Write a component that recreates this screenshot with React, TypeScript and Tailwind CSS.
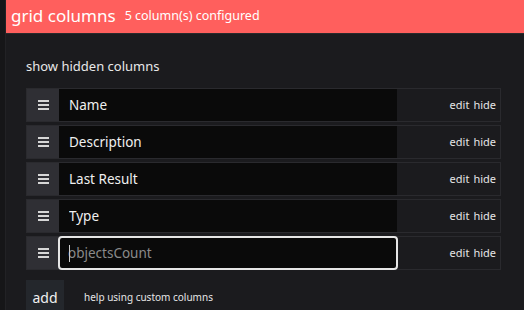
import React, { useState } from "react";

interface Column {
  name: string;
  placeholder?: boolean;
}

const columns: Column[] = [
  { name: "Name" },
  { name: "Description" },
  { name: "Last Result" },
  { name: "Type" },
  { name: "objectsCount", placeholder: true },
];

// handle with three bars
const DragHandle: React.FC = () => (
  <div className="w-[32px] shrink-0 bg-[#2f2f34] flex items-center justify-center">
    <svg width="11" height="10" viewBox="0 0 11 10">
      <rect x="0" y="0" width="11" height="2" fill="#d6d6d6" />
      <rect x="0" y="4" width="11" height="2" fill="#d6d6d6" />
      <rect x="0" y="8" width="11" height="2" fill="#d6d6d6" />
    </svg>
  </div>
);

const ColumnRow: React.FC<{ column: Column }> = ({ column }) => {
  const [value, setValue] = useState(column.placeholder ? "" : column.name);

  return (
    <div className="flex shrink-0 h-[34px] border border-[#2a2a2e]">
      <DragHandle />
      {column.placeholder ? (
        <div className="w-[340px] -my-px -ml-px h-[34px] rounded-[4px] border-2 border-[#e6e6e6] bg-[#0a0a0a] flex items-center pl-[9px]">
          <span className="w-px h-[17px] bg-[#cfcfcf] -mr-[2px] relative z-10" />
          <input
            className="bg-transparent outline-none text-[13.5px] text-[#e6e6e6] placeholder:text-[#8a8a8a] w-full"
            placeholder={column.name}
            value={value}
            onChange={(e) => setValue(e.target.value)}
            style={{ caretColor: "transparent" }}
          />
        </div>
      ) : (
        <input
          className="w-[338px] bg-[#0a0a0a] outline-none px-[10px] text-[13.5px] text-[#f0f0f0]"
          value={value}
          onChange={(e) => setValue(e.target.value)}
        />
      )}
      <div className="flex-1 flex items-center justify-end pr-[4px] text-[11px] text-[#e6e6e6] gap-[4px]">
        <span>edit</span>
        <span>hide</span>
      </div>
    </div>
  );
};

export default function App() {
  return (
    <div
      className="w-[524px] h-[310px] flex bg-[#1b1b1e] overflow-hidden"
      style={{ fontFamily: '"Noto Sans", "Open Sans", sans-serif' }}
    >
      <div className="w-[6px] shrink-0 bg-[#161618] border-r border-[#222225]" />
      <div className="flex-1 flex flex-col">
        <div className="h-[34px] shrink-0 bg-[#ff5f5d] border-b border-[#2a2a2c] flex items-center px-[5px] gap-[9px] text-white">
          <span className="text-[17px] leading-none -mt-[2px]">grid columns</span>
          <span className="text-[12.5px] leading-none">5 column(s) configured</span>
        </div>
        <div className="shrink-0 pl-[20px] pr-[23px] pt-[26px]">
          <div className="text-[13px] text-[#e8e8e8] leading-none mb-[15px]">show hidden columns</div>
          <div className="flex flex-col gap-[3px]">
            {columns.map((c) => (
              <ColumnRow key={c.name} column={c} />
            ))}
          </div>
          <div className="flex items-center mt-[10px] gap-[20px]">
            <button className="w-[38px] h-[34px] bg-[#24272c] text-[14px] text-[#f0f0f0]">add</button>
            <span className="text-[10px] text-[#e6e6e6]">help using custom columns</span>
          </div>
        </div>
      </div>
    </div>
  );
}
